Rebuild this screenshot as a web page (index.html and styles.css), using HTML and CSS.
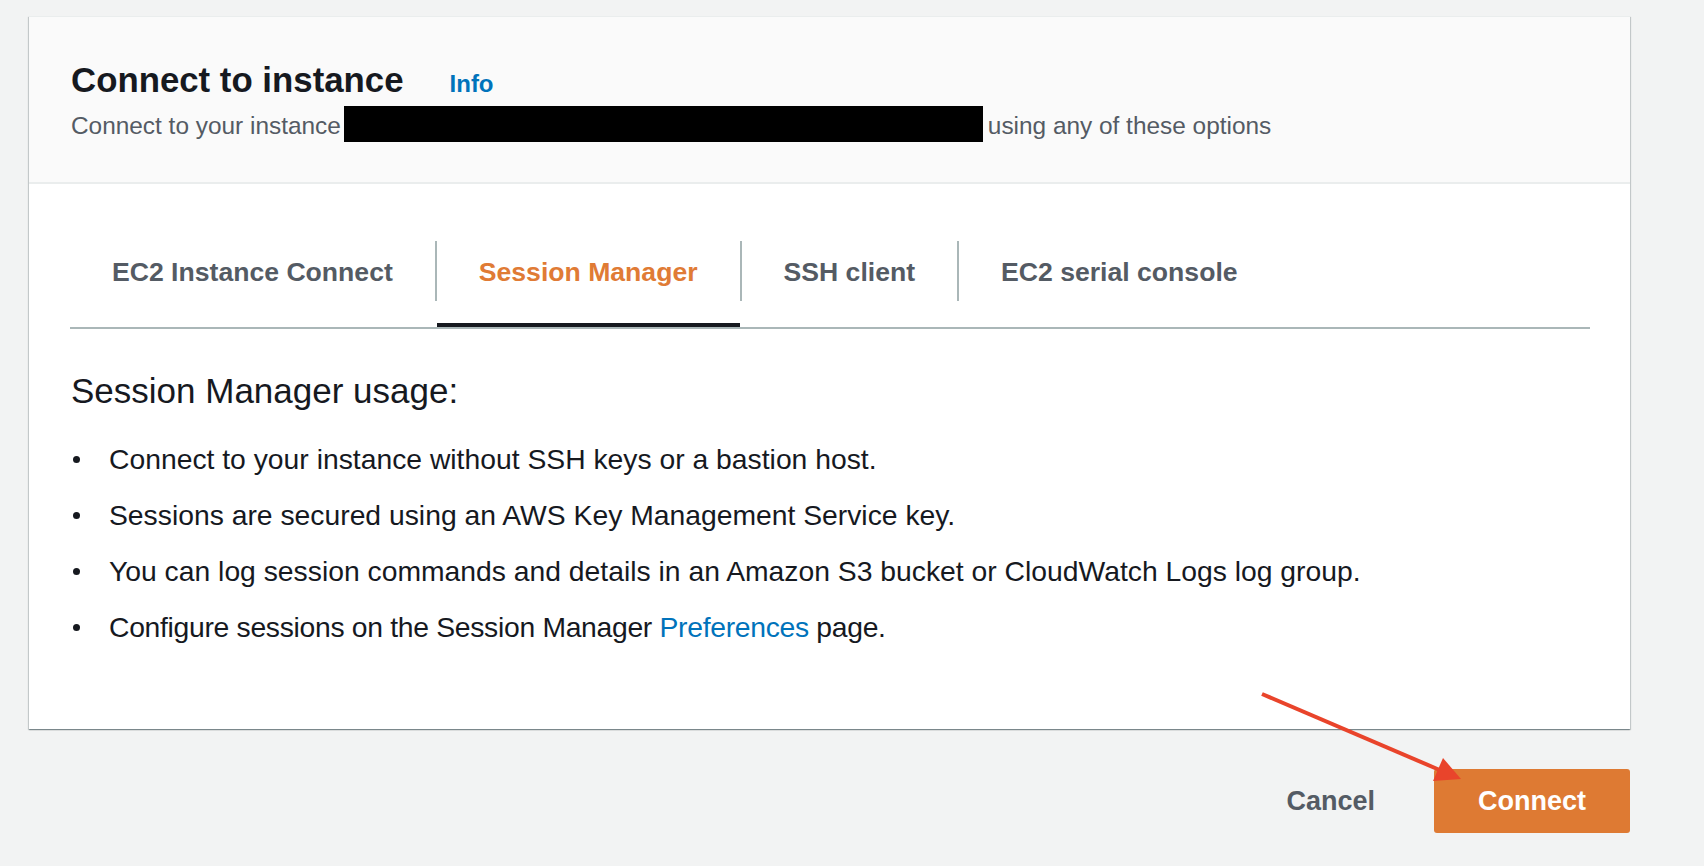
FILE: index.html
```html
<!DOCTYPE html>
<html lang="en">
<head>
<meta charset="utf-8">
<title>Connect to instance</title>
<link rel="stylesheet" href="styles.css">
</head>
<body>
<div class="page">
  <section class="card">
    <header class="card-header">
      <div class="title-row">
        <h1 class="title">Connect to instance</h1>
        <a class="info-link" href="#">Info</a>
      </div>
      <div class="subtitle">
        <span class="sub-text">Connect to your instance</span>
        <span class="redacted"></span>
        <span class="sub-text">using any of these options</span>
      </div>
    </header>
    <div class="card-body">
      <nav class="tabs">
        <div class="tab">EC2 Instance Connect</div>
        <div class="tab-sep"></div>
        <div class="tab active">Session Manager</div>
        <div class="tab-sep"></div>
        <div class="tab">SSH client</div>
        <div class="tab-sep"></div>
        <div class="tab">EC2 serial console</div>
      </nav>
      <h2 class="usage-title">Session Manager usage:</h2>
      <ul class="usage-list">
        <li><span>Connect to your instance without SSH keys or a bastion host.</span></li>
        <li><span>Sessions are secured using an AWS Key Management Service key.</span></li>
        <li><span>You can log session commands and details in an Amazon S3 bucket or CloudWatch Logs log group.</span></li>
        <li class="tight"><span>Configure sessions on the Session Manager <a class="link" href="#">Preferences</a> page.</span></li>
      </ul>
    </div>
  </section>
  <div class="actions">
    <button class="btn-cancel">Cancel</button>
    <button class="btn-primary">Connect</button>
  </div>
</div>
<svg class="annotation" width="1704" height="866" viewBox="0 0 1704 866">
  <line x1="1262" y1="694" x2="1442" y2="771" stroke="#e9442b" stroke-width="4" stroke-linecap="butt"/>
  <polygon points="1443,758 1433,781 1461,779" fill="#e9442b"/>
</svg>
</body>
</html>
```

FILE: styles.css
```css
html, body {
  margin: 0;
  padding: 0;
}

body {
  background: #f2f3f3;
  font-family: "Liberation Sans", Arial, sans-serif;
  color: #16191f;
  width: 1704px;
  height: 866px;
  overflow: hidden;
  position: relative;
}

.page {
  padding: 16px 74px 0 29px;
}

.card {
  background: #ffffff;
  border-top: 1px solid #eaeded;
  box-shadow: 0 1px 1px 0 rgba(0, 28, 36, 0.3), 1px 1px 1px 0 rgba(0, 28, 36, 0.15), -1px 1px 1px 0 rgba(0, 28, 36, 0.15);
}

.card-header {
  background: #fafafa;
  padding: 43px 42px 40px 42px;
  border-bottom: 2px solid #eaeded;
}

.title-row {
  display: flex;
  align-items: baseline;
  height: 40px;
}

.title {
  margin: 0;
  font-size: 34.8px;
  line-height: 40px;
  font-weight: 700;
  color: #16191f;
}

.info-link {
  margin-left: 46px;
  font-size: 24px;
  font-weight: 700;
  color: #0073bb;
  text-decoration: none;
}

.subtitle {
  display: flex;
  align-items: center;
  margin-top: 6px;
  height: 36px;
  font-size: 24.4px;
  line-height: 32px;
  color: #545b64;
}

.sub-text {
  padding-top: 4px;
}

.redacted {
  display: inline-block;
  width: 639px;
  height: 36px;
  background: #000000;
  margin: 0 5px 0 3px;
}

.card-body {
  padding: 37px 40px 74px 41px;
}

.tabs {
  display: flex;
  align-items: flex-start;
  border-bottom: 2px solid #aab7b8;
}

.tab {
  box-sizing: border-box;
  height: 106px;
  padding: 0 42px;
  display: flex;
  align-items: center;
  font-size: 26.6px;
  line-height: 32px;
  font-weight: 700;
  color: #545b64;
  border-bottom: 4px solid transparent;
  white-space: nowrap;
}

.tab.active {
  color: #e07b35;
  border-bottom-color: #16191f;
}

.tab-sep {
  width: 2px;
  height: 60px;
  margin-top: 20px;
  background: #aab7b8;
  flex: none;
}

.usage-title {
  margin: 42px 0 0 1px;
  font-size: 35px;
  line-height: 40px;
  font-weight: 400;
  color: #16191f;
}

.usage-list {
  list-style: none;
  margin: 20px 0 0 0;
  padding: 0;
}

.usage-list li {
  display: flex;
  align-items: center;
  height: 56px;
  font-size: 28.3px;
  line-height: 56px;
  color: #16191f;
  white-space: nowrap;
}

.usage-list li.tight {
  letter-spacing: -0.3px;
}

.usage-list li::before {
  content: "";
  width: 7px;
  height: 7px;
  border-radius: 50%;
  background: #16191f;
  margin-left: 3px;
  margin-right: 29px;
  flex: none;
}

.link {
  color: #0073bb;
  text-decoration: none;
}

.actions {
  display: flex;
  justify-content: flex-end;
  align-items: center;
  margin-top: 40px;
  gap: 39px;
}

.btn-cancel {
  font-family: inherit;
  background: transparent;
  border: none;
  padding: 0 20px;
  height: 64px;
  font-size: 27px;
  font-weight: 700;
  color: #545b64;
}

.btn-primary {
  font-family: inherit;
  background: #de7a33;
  border: none;
  border-radius: 3px;
  width: 196px;
  height: 64px;
  padding: 0;
  font-size: 27px;
  font-weight: 700;
  color: #ffffff;
}

.annotation {
  position: absolute;
  left: 0;
  top: 0;
  pointer-events: none;
}
```
